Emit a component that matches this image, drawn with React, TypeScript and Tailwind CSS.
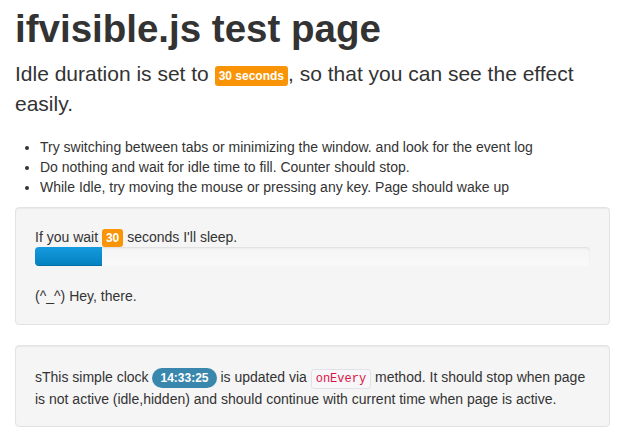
export default function App() {
  return (
    <div className="min-h-[441px] bg-white px-[15px] text-[#333] font-['Liberation_Sans',Arial,sans-serif] text-[14px] leading-[20px]">
      <h1 className="mt-[9px] mb-[10px] text-[38.5px] leading-[40px] font-bold">ifvisible.js test page</h1>
      <p className="mb-[18px] text-[21px] leading-[30px] font-normal">
        Idle duration is set to{' '}
        <span className="inline-block rounded-[3px] bg-[#f89406] px-[4px] text-[12px] leading-[20px] font-bold text-white align-[1px]">30 seconds</span>, so that you can see the effect easily.
      </p>
      <ul className="mb-[10px] ml-[25px] list-disc">
        <li>Try switching between tabs or minimizing the window. and look for the event log</li>
        <li>Do nothing and wait for idle time to fill. Counter should stop.</li>
        <li>While Idle, try moving the mouse or pressing any key. Page should wake up</li>
      </ul>
      <div className="mb-[20px] rounded-[4px] border border-[#e3e3e3] bg-[#f5f5f5] p-[19px] pb-[18px] shadow-[inset_0_1px_1px_rgba(0,0,0,0.05)]">
        <div>
          If you wait{' '}
          <span className="inline-block rounded-[3px] bg-[#f89406] px-[4px] text-[12px] leading-[18px] font-bold text-white">30</span>{' '}
          seconds I'll sleep.
        </div>
        <div className="mb-[20px] h-[19px] overflow-hidden rounded-[4px] bg-gradient-to-b from-[#f5f5f5] to-[#f9f9f9] shadow-[inset_0_1px_2px_rgba(0,0,0,0.1)]">
          <div className="h-full w-[12%] bg-gradient-to-b from-[#149bdf] to-[#0480be] shadow-[inset_0_-1px_0_rgba(0,0,0,0.15)]" />
        </div>
        <div>(^_^) Hey, there.</div>
      </div>
      <div className="mb-[20px] rounded-[4px] border border-[#e3e3e3] bg-[#f5f5f5] px-[19px] pt-[21px] pb-[17px] shadow-[inset_0_1px_1px_rgba(0,0,0,0.05)]">
        <p>
          sThis simple clock{' '}
          <span className="inline-block rounded-[10px] bg-[#3a87ad] px-[8px] text-[12px] leading-[20px] font-bold text-white">14:33:25</span>{' '}
          is updated via{' '}
          <code className="rounded-[3px] border border-[#e1e1e8] bg-[#f7f7f9] px-[4px] py-[2px] font-['Liberation_Mono',monospace] text-[12px] text-[#d14]">onEvery</code>{' '}
          method. It should stop when page is not active (idle,hidden) and should continue with current time when page is active.
        </p>
      </div>
    </div>
  );
}
